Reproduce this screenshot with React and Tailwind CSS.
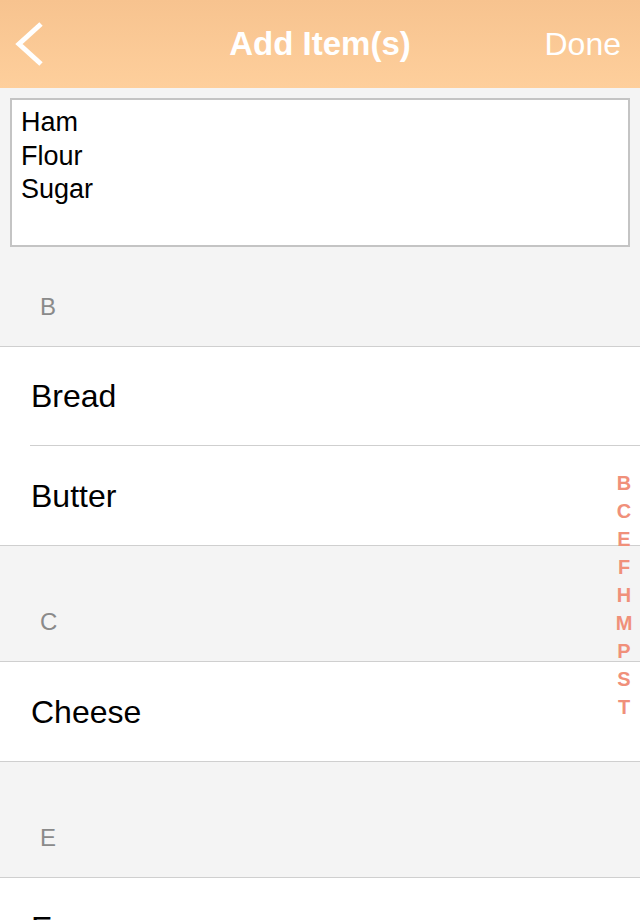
const sections = [
  { letter: "B", first: true, items: ["Bread", "Butter"] },
  { letter: "C", items: ["Cheese"] },
  { letter: "E", items: ["Eggs"] },
];

const index = ["B", "C", "E", "F", "H", "M", "P", "S", "T"];

function Header() {
  return (
    <div className="h-[88px] bg-gradient-to-b from-[#f7c38f] to-[#fecf9c] flex items-center px-4 text-white">
      <div className="w-[110px] flex">
        <svg width="30" height="44" viewBox="0 0 30 44" className="-ml-[1px]">
          <polyline points="26,2 4,22 26,42" fill="none" stroke="white" strokeWidth="5" />
        </svg>
      </div>
      <div className="flex-1 text-center text-[33px] font-bold">Add Item(s)</div>
      <div className="w-[110px] text-right text-[32px] pr-[3px]">Done</div>
    </div>
  );
}

function Section({ letter, first, items }) {
  return (
    <div>
      <div
        className={
          "bg-[#f4f4f4] border-b border-[#cfcfcf] flex items-end pb-[27px] pl-10 " +
          (first ? "h-[100px]" : "h-[116px]")
        }
      >
        <span className="text-[24px] leading-6 text-[#8a8a8a]">{letter}</span>
      </div>
      {items.map((item, i) => (
        <div key={item} className="bg-white">
          <div
            className={
              "flex items-center pl-[31px] text-[32px] text-black " +
              (i === items.length - 1 ? "h-[99px]" : "h-[98px]")
            }
          >
            {item}
          </div>
          <div className={"h-px bg-[#cfcfcf] " + (i < items.length - 1 ? "ml-[30px]" : "")} />
        </div>
      ))}
    </div>
  );
}

export default function App() {
  return (
    <div
      className="w-[640px] h-[920px] overflow-hidden bg-[#f4f4f4] relative"
      style={{ fontFamily: '"Liberation Sans", Arial, sans-serif' }}
    >
      <Header />
      <div className="px-[10px] pt-[10px]">
        <div className="h-[149px] bg-white border-2 border-[#c4c4c4] px-[9px] pt-[6px] text-[27px] leading-[33.5px] text-black">
          <div>Ham</div>
          <div>Flour</div>
          <div>Sugar</div>
        </div>
      </div>
      {sections.map((s) => (
        <Section key={s.letter} {...s} />
      ))}
      <div className="absolute right-0 top-[469px] w-8 flex flex-col items-center text-[20px] font-bold leading-[28px] text-[#f0907a]">
        {index.map((l) => (
          <span key={l}>{l}</span>
        ))}
      </div>
    </div>
  );
}
